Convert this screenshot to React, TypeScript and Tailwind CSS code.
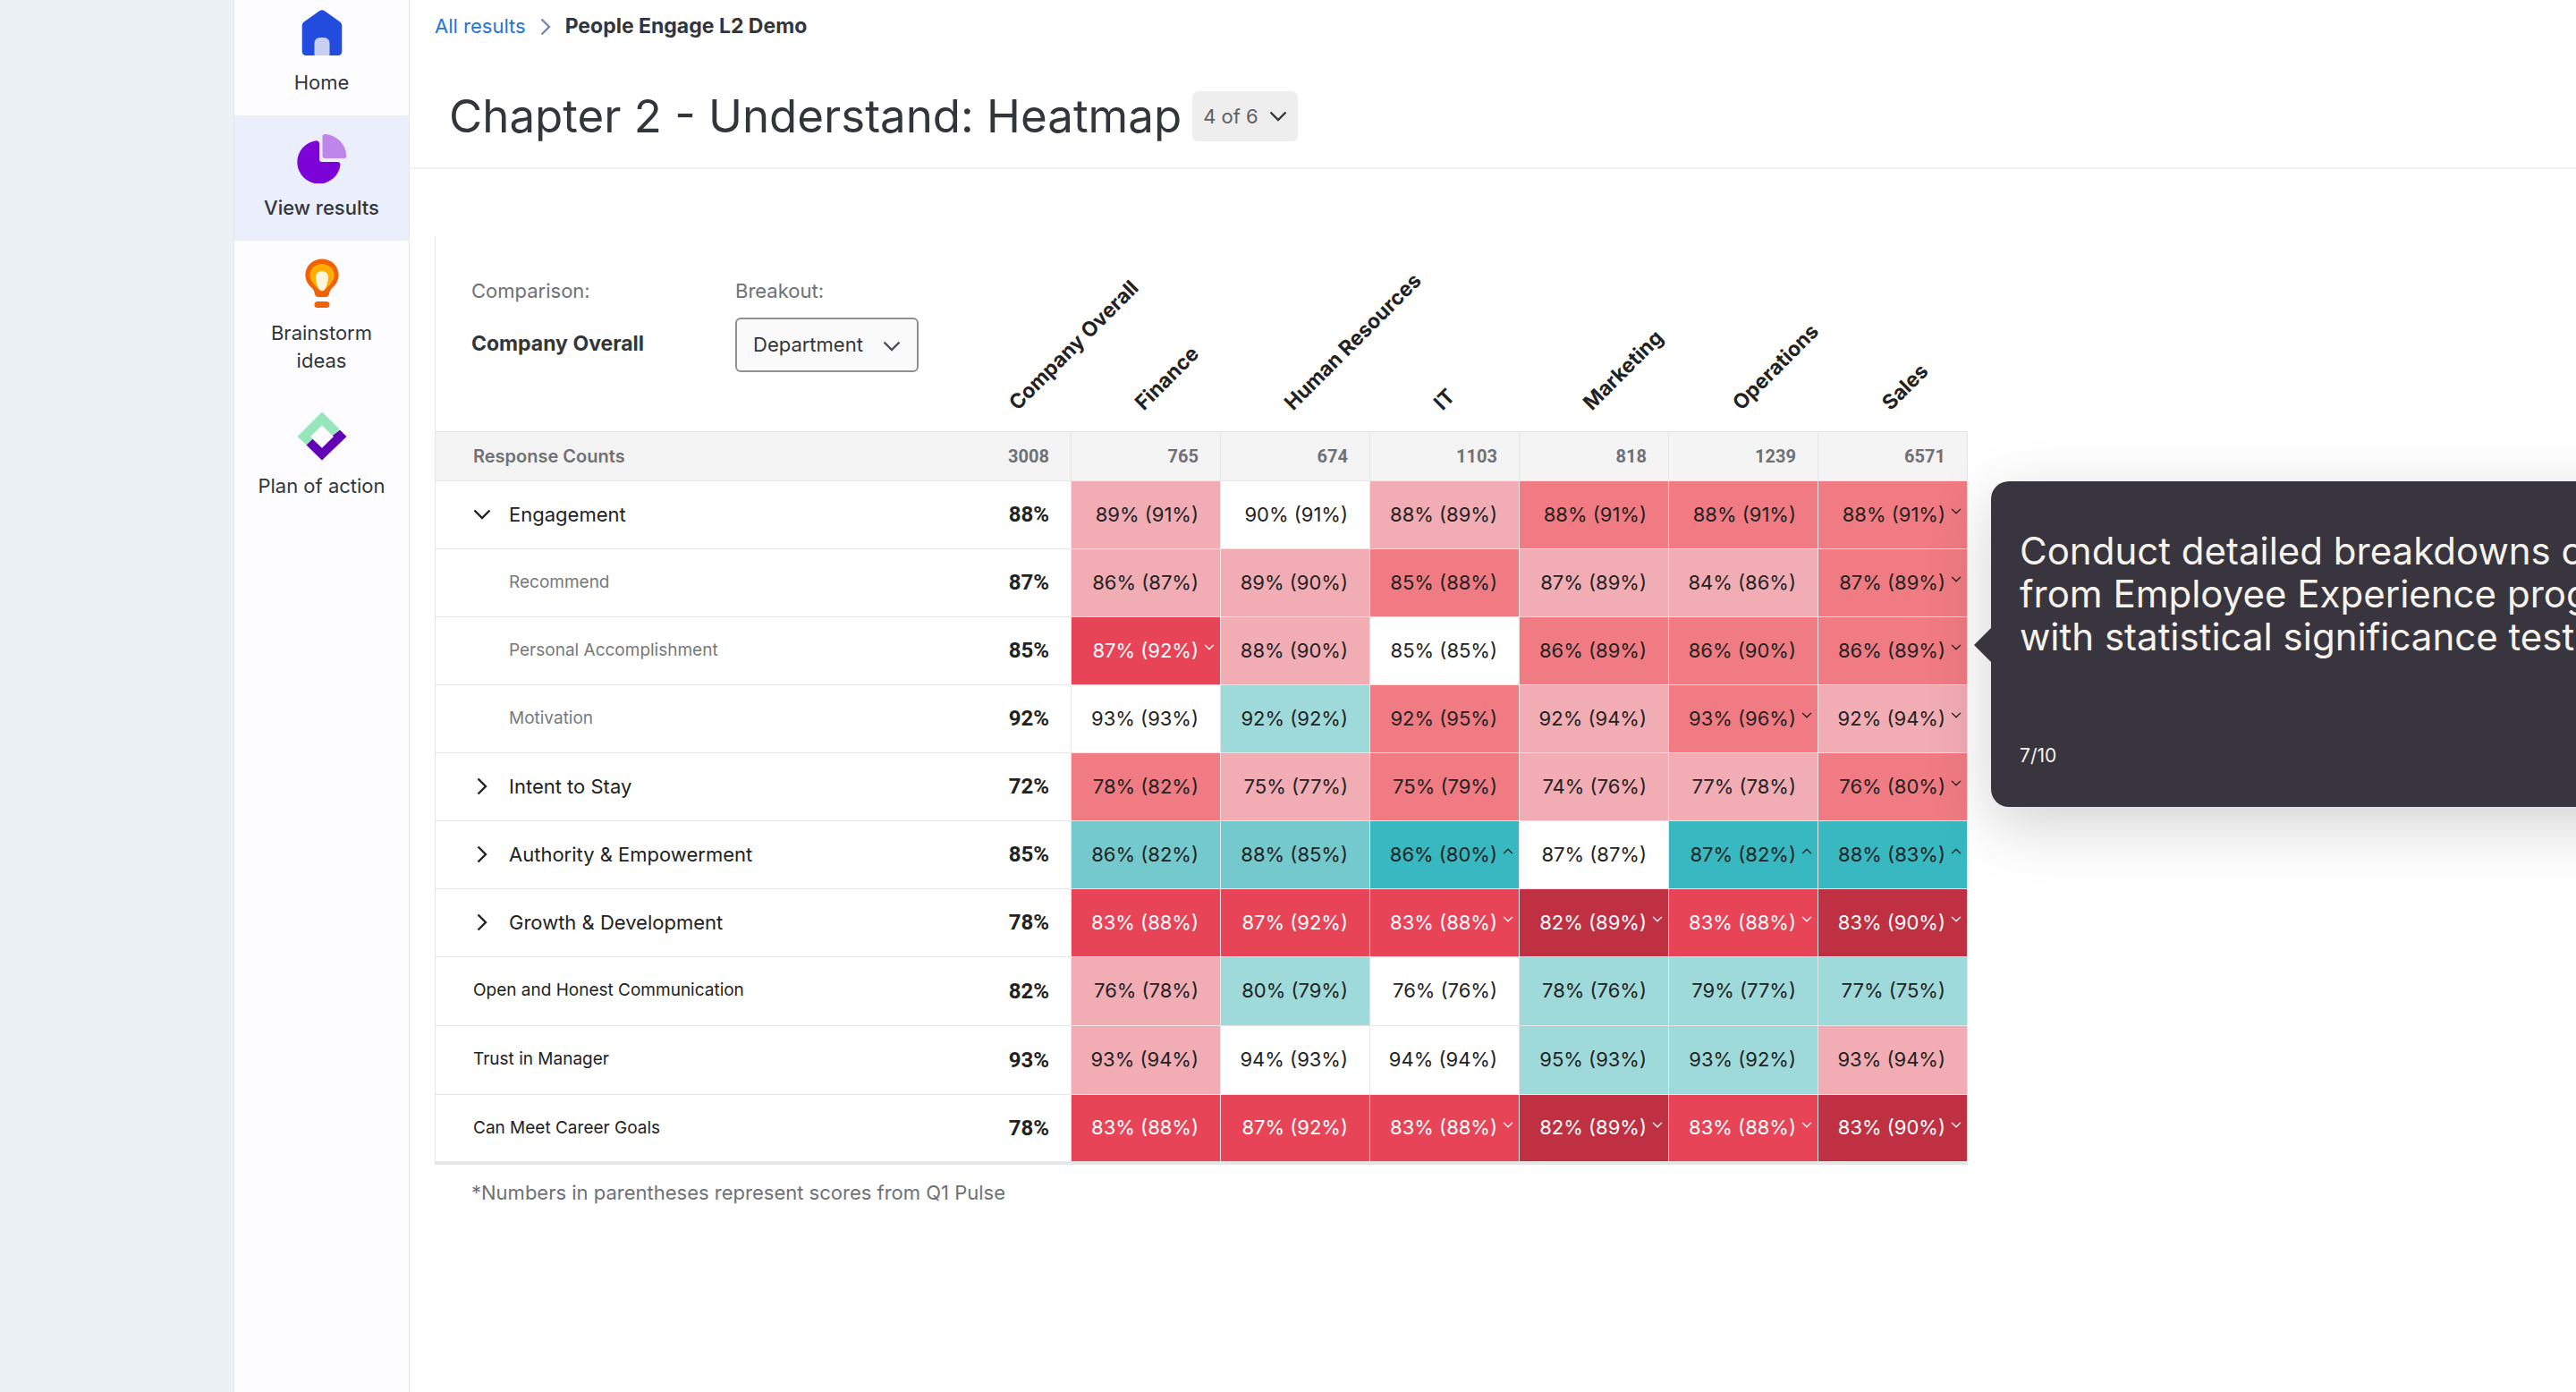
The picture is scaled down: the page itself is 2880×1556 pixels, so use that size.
import { clsx } from "clsx";
import { useState } from "react";
import type { ReactNode } from "react";

type Tone =
  | "none"
  | "pink"
  | "salmon"
  | "red"
  | "crimson"
  | "mint"
  | "aqua"
  | "teal";

type Trend = "up" | "down";

type Cell = [score: number, previous: number, tone: Tone, trend?: Trend];

type Row = {
  label: string;
  kind: "open" | "closed" | "child" | "item";
  overall: number;
  cells: Cell[];
};

const TONES: Record<Tone, string> = {
  none: "bg-white text-[#222222]",
  pink: "bg-[#f2acb4] text-[#222222]",
  salmon: "bg-[#f07b82] text-[#222222]",
  red: "bg-[#e84458] text-white",
  crimson: "bg-[#bf3042] text-white",
  mint: "bg-[#9fdadb] text-[#222222]",
  aqua: "bg-[#74c9cd] text-[#222222]",
  teal: "bg-[#38b8c0] text-[#222222]",
};

const COLUMNS = [
  { name: "Company Overall", count: 3008 },
  { name: "Finance", count: 765 },
  { name: "Human Resources", count: 674 },
  { name: "IT", count: 1103 },
  { name: "Marketing", count: 818 },
  { name: "Operations", count: 1239 },
  { name: "Sales", count: 6571 },
];

const ROWS: Row[] = [
  {
    label: "Engagement",
    kind: "open",
    overall: 88,
    cells: [
      [89, 91, "pink"],
      [90, 91, "none"],
      [88, 89, "pink"],
      [88, 91, "salmon"],
      [88, 91, "salmon"],
      [88, 91, "salmon", "down"],
    ],
  },
  {
    label: "Recommend",
    kind: "child",
    overall: 87,
    cells: [
      [86, 87, "pink"],
      [89, 90, "pink"],
      [85, 88, "salmon"],
      [87, 89, "pink"],
      [84, 86, "pink"],
      [87, 89, "salmon", "down"],
    ],
  },
  {
    label: "Personal Accomplishment",
    kind: "child",
    overall: 85,
    cells: [
      [87, 92, "red", "down"],
      [88, 90, "pink"],
      [85, 85, "none"],
      [86, 89, "salmon"],
      [86, 90, "salmon"],
      [86, 89, "salmon", "down"],
    ],
  },
  {
    label: "Motivation",
    kind: "child",
    overall: 92,
    cells: [
      [93, 93, "none"],
      [92, 92, "mint"],
      [92, 95, "salmon"],
      [92, 94, "pink"],
      [93, 96, "salmon", "down"],
      [92, 94, "pink", "down"],
    ],
  },
  {
    label: "Intent to Stay",
    kind: "closed",
    overall: 72,
    cells: [
      [78, 82, "salmon"],
      [75, 77, "pink"],
      [75, 79, "salmon"],
      [74, 76, "pink"],
      [77, 78, "pink"],
      [76, 80, "salmon", "down"],
    ],
  },
  {
    label: "Authority & Empowerment",
    kind: "closed",
    overall: 85,
    cells: [
      [86, 82, "aqua"],
      [88, 85, "aqua"],
      [86, 80, "teal", "up"],
      [87, 87, "none"],
      [87, 82, "teal", "up"],
      [88, 83, "teal", "up"],
    ],
  },
  {
    label: "Growth & Development",
    kind: "closed",
    overall: 78,
    cells: [
      [83, 88, "red"],
      [87, 92, "red"],
      [83, 88, "red", "down"],
      [82, 89, "crimson", "down"],
      [83, 88, "red", "down"],
      [83, 90, "crimson", "down"],
    ],
  },
  {
    label: "Open and Honest Communication",
    kind: "item",
    overall: 82,
    cells: [
      [76, 78, "pink"],
      [80, 79, "mint"],
      [76, 76, "none"],
      [78, 76, "mint"],
      [79, 77, "mint"],
      [77, 75, "mint"],
    ],
  },
  {
    label: "Trust in Manager",
    kind: "item",
    overall: 93,
    cells: [
      [93, 94, "pink"],
      [94, 93, "none"],
      [94, 94, "none"],
      [95, 93, "mint"],
      [93, 92, "mint"],
      [93, 94, "pink"],
    ],
  },
  {
    label: "Can Meet Career Goals",
    kind: "item",
    overall: 78,
    cells: [
      [83, 88, "red"],
      [87, 92, "red"],
      [83, 88, "red", "down"],
      [82, 89, "crimson", "down"],
      [83, 88, "red", "down"],
      [83, 90, "crimson", "down"],
    ],
  },
];

function Chevron({ className = "" }: { className?: string }) {
  return (
    <svg
      viewBox="0 0 20 12"
      fill="none"
      stroke="currentColor"
      strokeWidth="2.4"
      className={className}
      aria-hidden
    >
      <path d="M1.5 1.5 10 10l8.5-8.5" />
    </svg>
  );
}

function IconHome() {
  return (
    <svg viewBox="0 0 56 56" className="size-14" aria-hidden>
      <path
        d="M25.4 3.1a4.6 4.6 0 0 1 5.2 0l17.6 12.4a5 5 0 0 1 2.1 4.1v29.2a4.2 4.2 0 0 1-4.2 4.2H9.9a4.2 4.2 0 0 1-4.2-4.2V19.6a5 5 0 0 1 2.1-4.1z"
        fill="#214cdd"
      />
      <path d="M19.5 53V39a6 6 0 0 1 6-6h5a6 6 0 0 1 6 6v14z" fill="#c7d0f1" />
    </svg>
  );
}

function IconResults() {
  return (
    <svg viewBox="0 0 56 56" className="size-14" aria-hidden>
      <path
        d="M21.5 8.2a3 3 0 0 1 3.5 3V29a3 3 0 0 0 3 3h17.5a3 3 0 0 1 3 3.4A24.2 24.2 0 1 1 21.5 8.2z"
        fill="#7c04d8"
      />
      <path
        d="M28.5 4a3 3 0 0 1 3.3-3A26 26 0 0 1 55.4 24.8a3 3 0 0 1-3 3.2H31.5a3 3 0 0 1-3-3z"
        fill="#be85ea"
      />
    </svg>
  );
}

function IconIdeas() {
  return (
    <svg viewBox="0 0 56 56" className="size-14" aria-hidden>
      <path
        d="M28 .5c10.6 0 18.6 8 18.6 17.8 0 6.6-3.2 10.8-6.9 14.2-2.3 2.2-3.2 4-3.5 6.5-.3 2.3-1.7 4-4 4h-8.4c-2.3 0-3.7-1.7-4-4-.3-2.5-1.2-4.3-3.5-6.5-3.7-3.4-6.9-7.6-6.9-14.2C9.4 8.5 17.4.5 28 .5z"
        fill="#f06205"
      />
      <path
        d="M28 6c7.8 0 13.6 5.6 13.6 12.6 0 6-4.6 10.4-9.2 15.4h-8.8c-4.6-5-9.2-9.4-9.2-15.4C14.4 11.6 20.2 6 28 6z"
        fill="#ffae00"
      />
      <path
        d="M28 14c4.2 0 7 3 7 6.8 0 4-1.8 11.2-4.2 14.2-1.3 1.6-4.3 1.6-5.6 0C22.8 32 21 24.8 21 20.8c0-3.8 2.8-6.8 7-6.8z"
        fill="#fff5dc"
      />
      <rect x="19.5" y="48" width="17" height="7" rx="3.5" fill="#f06205" />
    </svg>
  );
}

function IconPlan() {
  return (
    <svg viewBox="0 0 56 56" className="size-14" aria-hidden>
      <path
        d="M28 .5 47.5 19.8 39.8 27 28 15.5 15 28l2.5 2.8-7 6.4L.5 28z"
        fill="#95e6b9"
      />
      <path
        d="M48 20.5 55.5 28 28 54.5 10.5 37.6l7-6.8L28 40.8 41 28l-1.2-1z"
        fill="#6200b5"
      />
    </svg>
  );
}

const NAV: { label: string; icon: ReactNode; active?: boolean }[] = [
  { label: "Home", icon: <IconHome /> },
  { label: "View results", icon: <IconResults />, active: true },
  { label: "Brainstorm ideas", icon: <IconIdeas /> },
  { label: "Plan of action", icon: <IconPlan /> },
];

function Sidebar() {
  return (
    <nav
      aria-label="Primary"
      className="w-[197px] shrink-0 border-x border-x-[#e4e8ea] bg-[#fdfdff]"
    >
      <ul className="-mt-[11px]">
        {NAV.map(({ label, icon, active }) => (
          <li key={label}>
            <a
              href="#"
              aria-current={active ? "page" : undefined}
              className={clsx(
                "flex flex-col items-center gap-3 px-5 pt-5 pb-[21px] text-center text-[22px] leading-[31px]",
                active && "bg-[#ebeefb] font-medium"
              )}
            >
              {icon}
              <span>{label}</span>
            </a>
          </li>
        ))}
      </ul>
    </nav>
  );
}

function PageHeader() {
  return (
    <header className="border-b-2 border-[#f1f1f2] pb-6">
      <nav
        aria-label="Breadcrumb"
        className="flex items-center gap-3 pt-[14px] pl-7 text-[22px] leading-[31px]"
      >
        <a href="#" className="text-[#1f76db]">
          All results
        </a>
        <Chevron className="h-3 w-5 -rotate-90 text-[#7386b5]" />
        <span className="text-[23px] font-bold">People Engage L2 Demo</span>
      </nav>
      <div className="mt-[52px] flex items-center gap-3 pl-11">
        <h1 className="text-[51px] leading-[66px]">
          Chapter 2 - Understand: Heatmap
        </h1>
        <button
          type="button"
          className="flex h-14 items-center gap-3 rounded-md bg-[#eeeeee] px-3 text-[22px] text-[#5c6064]"
        >
          4 of 6
          <Chevron className="h-3 w-5 text-[#32363a]" />
        </button>
      </div>
    </header>
  );
}

function Controls() {
  const [breakout, setBreakout] = useState("Department");
  return (
    <div className="flex text-[22px] leading-[31px] font-normal">
      <div className="w-[295px]">
        <p className="text-[#6e7276]">Comparison:</p>
        <p className="mt-7 text-[23px] font-bold text-[#32363a]">
          Company Overall
        </p>
      </div>
      <div>
        <label htmlFor="breakout" className="block text-[#6e7276]">
          Breakout:
        </label>
        <div className="relative mt-[14px] w-fit">
          <select
            id="breakout"
            value={breakout}
            onChange={(e) => setBreakout(e.target.value)}
            className="h-[61px] w-[205px] appearance-none rounded-md border-2 border-[#909090] bg-[#fafafa] pl-[18px] text-[#32363a]"
          >
            <option>Department</option>
            <option>Location</option>
          </select>
          <Chevron className="pointer-events-none absolute top-[26px] right-5 h-3 w-5 text-[#4a4e52]" />
        </div>
      </div>
    </div>
  );
}

function RowLabel({ row }: { row: Row }) {
  if (row.kind === "open" || row.kind === "closed") {
    return (
      <button
        type="button"
        aria-expanded={row.kind === "open"}
        className="flex items-center gap-5 text-[22px]"
      >
        <Chevron
          className={clsx("h-3 w-5", row.kind === "closed" && "-rotate-90")}
        />
        {row.label}
      </button>
    );
  }
  if (row.kind === "child") {
    return <span className="pl-10 text-[19px] text-[#77797b]">{row.label}</span>;
  }
  return <span className="text-[19px]">{row.label}</span>;
}

function Score({ cell }: { cell: Cell }) {
  const [score, previous, tone, trend] = cell;
  return (
    <td
      className={clsx(
        "relative border border-[#e6e6e6] pr-6 text-right text-[22px] whitespace-nowrap",
        TONES[tone]
      )}
    >
      {score}% ({previous}%)
      {trend && (
        <Chevron
          className={clsx(
            "absolute top-[30px] right-[6px] h-[7px] w-3",
            trend === "up" && "rotate-180"
          )}
        />
      )}
    </td>
  );
}

function Heatmap() {
  return (
    <table className="table-fixed border-collapse border-b-4 border-l border-[#e6e6e6] text-[#222222]">
      <colgroup>
        <col className="w-[596px]" />
        <col className="w-[115px]" />
        <col span={6} className="w-[167px]" />
      </colgroup>
      <thead>
        <tr className="h-[218px]">
          <th className="pt-[46px] pl-10 text-left align-top">
            <Controls />
          </th>
          {COLUMNS.map((column) => (
            <th key={column.name} scope="col" className="relative">
              <span className="absolute bottom-[18px] left-1/2 ml-0.5 origin-bottom-left -rotate-45 text-[23px] leading-7 font-bold whitespace-nowrap">
                {column.name}
              </span>
            </th>
          ))}
        </tr>
        <tr className="h-[55px] border-y border-[#e6e6e6] bg-[#f4f4f4] text-[20px] text-[#6e7276]">
          <th scope="row" className="pl-[42px] text-left font-semibold">
            Response Counts
          </th>
          {COLUMNS.map((column) => (
            <td
              key={column.name}
              className="border-r border-[#e6e6e6] pr-6 text-right font-[Roboto] font-bold"
            >
              {column.count}
            </td>
          ))}
        </tr>
      </thead>
      <tbody>
        {ROWS.map((row) => (
          <tr
            key={row.label}
            className={clsx(
              "border-y border-[#e6e6e6]",
              row.kind === "item" ? "h-[77px]" : "h-[76px]"
            )}
          >
            <th scope="row" className="pl-[42px] text-left font-normal">
              <RowLabel row={row} />
            </th>
            <td className="pr-6 text-right font-[Roboto] text-[24px] font-bold">
              {row.overall}%
            </td>
            {row.cells.map((cell, i) => (
              <Score key={COLUMNS[i + 1].name} cell={cell} />
            ))}
          </tr>
        ))}
      </tbody>
    </table>
  );
}

function TourStep() {
  return (
    <aside className="absolute top-[274px] left-full ml-[26px] w-[820px] rounded-[20px] bg-[#38353f] px-8 pt-[54px] pb-10 text-[#f5f3ec] shadow-[0_20px_70px_rgba(0,0,0,0.18)]">
      <svg
        viewBox="0 0 20 38"
        className="absolute top-[164px] right-full h-[38px] w-5"
        aria-hidden
      >
        <path d="M20 0v38L1 19z" fill="#38353f" />
      </svg>
      <p className="text-[42px] leading-[48px] whitespace-nowrap">
        Conduct detailed breakdowns of data
        <br />
        from Employee Experience programs
        <br />
        with statistical significance testing
      </p>
      <p className="mt-[92px] text-[21px] leading-[34px]">7/10</p>
    </aside>
  );
}

export default function App() {
  return (
    <div className="flex min-h-screen overflow-hidden bg-white font-[Inter,sans-serif] text-[#32363a]">
      <div className="w-[261px] shrink-0 bg-[#ebf1f4]" />
      <Sidebar />
      <main className="min-w-0 flex-1">
        <PageHeader />
        <section className="px-7 pt-[75px]">
          <div className="relative w-fit">
            <Heatmap />
            <TourStep />
          </div>
          <p className="mt-4 pl-[41px] text-[22px] leading-[31px] text-[#6e7276]">
            *Numbers in parentheses represent scores from Q1 Pulse
          </p>
        </section>
      </main>
    </div>
  );
}
